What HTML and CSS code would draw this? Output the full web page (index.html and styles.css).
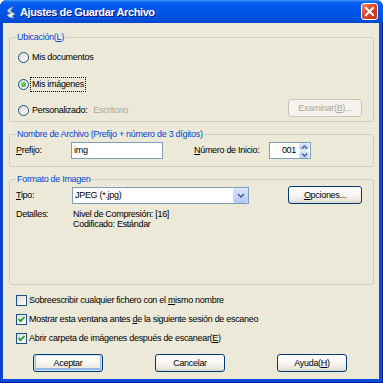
FILE: index.html
```html
<html>
<head>
  <meta charset="UTF-8">
  <title>Ajustes de Guardar Archivo</title>
  <link rel="stylesheet" href="styles.css">
</head>
<body>

<div class="window">

  <div class="titlebar">
    <svg class="app-icon" width="12" height="13" viewBox="0 0 12 13">
      <path d="M8 1 C4 2 2 4 3 6 L6 7 L2 9 C3 11 6 12 9 12 L7 10 L10 8 L5 5 Z" fill="#e8ecf4" stroke="#8a96aa" stroke-width="0.8"/>
    </svg>
    <span class="title">Ajustes de Guardar Archivo</span>
    <span class="close">
      <svg width="11" height="11" viewBox="0 0 11 11"><path d="M2 2 L9 9 M9 2 L2 9" stroke="#fff" stroke-width="2" stroke-linecap="square"/></svg>
    </span>
  </div>

  <div class="client">

    <fieldset class="group g-location">
      <legend>Ubicación(<u>L</u>)</legend>
      <div class="opt">
        <span class="radio"></span><span>Mis documentos</span>
      </div>
      <div class="opt r2">
        <span class="radio on"></span><span class="focus">Mis imágenes</span>
      </div>
      <div class="opt r3">
        <span class="radio"></span><span>Personalizado:</span><span class="dim path">Escritorio</span>
        <span class="btn disabled browse">Examinar(<u>B</u>)...</span>
      </div>
    </fieldset>

    <fieldset class="group g-name">
      <legend>Nombre de Archivo (Prefijo + número de 3 dígitos)</legend>
      <div class="field-row">
        <span class="lbl"><u>P</u>refijo:</span>
        <span class="txt">img</span>
        <span class="lbl num-lbl"><u>N</u>úmero de Inicio:</span>
        <span class="spin">
          <span class="spin-val">001</span>
          <span class="spin-btns">
            <span class="spin-b"><svg width="7" height="4" viewBox="0 0 7 4"><path d="M1 3.5 L3.5 1 L6 3.5" fill="none" stroke="#4d6185" stroke-width="1.3"/></svg></span>
            <span class="spin-b"><svg width="7" height="4" viewBox="0 0 7 4"><path d="M1 0.5 L3.5 3 L6 0.5" fill="none" stroke="#4d6185" stroke-width="1.3"/></svg></span>
          </span>
        </span>
      </div>
    </fieldset>

    <fieldset class="group g-format">
      <legend>Formato de Imagen</legend>
      <div class="field-row type-row">
        <span class="lbl"><u>T</u>ipo:</span>
        <span class="combo">
          <span class="combo-val">JPEG (*.jpg)</span>
          <span class="combo-arrow"><svg width="8" height="5" viewBox="0 0 8 5"><path d="M1 1 L4 4 L7 1" fill="none" stroke="#4d6185" stroke-width="1.6"/></svg></span>
        </span>
        <span class="btn options"><u>O</u>pciones...</span>
      </div>
      <div class="details">
        <span class="lbl dlbl">Detalles:</span>
        <span>Nivel de Compresión: [16]<br>Codificado: Estándar</span>
      </div>
    </fieldset>

    <div class="checks">
      <div class="chk"><span class="box"></span><span>Sobreescribir cualquier fichero con el <u>m</u>ismo nombre</span></div>
      <div class="chk"><span class="box on"><svg width="9" height="9" viewBox="0 0 9 9"><path d="M1.5 4 L3.5 6.2 L7.5 2" fill="none" stroke="#21a121" stroke-width="1.8"/></svg></span><span>Mostrar esta ventana antes <u>d</u>e la siguiente sesión de escaneo</span></div>
      <div class="chk"><span class="box on"><svg width="9" height="9" viewBox="0 0 9 9"><path d="M1.5 4 L3.5 6.2 L7.5 2" fill="none" stroke="#21a121" stroke-width="1.8"/></svg></span><span>Abrir carpeta de imágenes después de escanear(<u>E</u>)</span></div>
    </div>

    <div class="actions">
      <span class="btn default">Aceptar</span>
      <span class="btn">Cancelar</span>
      <span class="btn">Ayuda(<u>H</u>)</span>
    </div>

  </div>
</div>

</body>
</html>
```

FILE: styles.css
```css
body { margin:0; padding:0; background:#fff; font: 9px/11px "Liberation Sans", Arial, sans-serif; letter-spacing:-0.3px; color:#000; }
u { text-underline-offset:1px; }

.window {
  width:383px; height:383px;
  display:flex; flex-direction:column;
  background:#0a4bda;
  border-radius:7px 7px 0 0;
  overflow:hidden;
  box-shadow: inset -1px -1px 0 #00179a, inset 1px 0 0 #0a3fc0;
}

.titlebar {
  height:23px; flex:none;
  display:flex; align-items:center;
  padding:0 5px 0 5px;
  color:#fff;
  background: linear-gradient(#4a9bff 0, #0a64f2 2px, #0059ee 6px, #0055e5 13px, #0052e0 18px, #0047cc 23px);
}
.app-icon { margin:2px 3px 0 0; }
.title { font-weight:bold; font-size:11px; letter-spacing:-0.4px; margin-top:2px; text-shadow:1px 1px 0 #0a1883; }
.close {
  margin-left:auto;
  width:15px; height:15px;
  border:1px solid #fff; border-radius:3px;
  background: linear-gradient(135deg, #ef8a66, #d8492a 45%, #c23414);
  display:flex; align-items:center; justify-content:center;
}

.client {
  flex:1;
  margin:0 4px 4px 3px;
  background:#ece9d8;
  padding:9px 5px 0 6px;
  display:flex; flex-direction:column;
}

.group { margin:0; border:1px solid #d0d0bf; border-radius:3px; padding:0 6px; min-width:0; }
.group legend { color:#0046d5; padding:0 1px; line-height:11px; }

.g-location { padding:6px 6px 3px; }
.opt { display:flex; align-items:center; height:16px; padding-left:2px; }
.opt.r2 { margin-top:11px; }
.opt.r3 { margin-top:10px; }
.radio {
  width:11px; height:11px; box-sizing:border-box; flex:none;
  border:1px solid #1c5180; border-radius:50%;
  background: linear-gradient(135deg, #dcdcd4, #fff);
  margin-right:3px;
  display:flex; align-items:center; justify-content:center;
}
.radio.on::after { content:""; width:5px; height:5px; border-radius:50%; background: radial-gradient(circle at 35% 35%, #6ee06e, #21a121); }
.focus { outline:1px dotted #000; padding:1px 1px; margin-left:-1px; }
.dim { color:#aca899; }
.path { margin-left:6px; }

.btn {
  width:70px; height:18px; box-sizing:border-box;
  border:1px solid #003c74; border-radius:3px;
  background: linear-gradient(#fff, #f5f4ef 55%, #e8e6dc 85%, #d6d0c5);
  display:flex; align-items:center; justify-content:center;
  flex:none;
}
.btn.default { box-shadow: inset 0 0 0 1px #cee7ff, inset 0 -1px 0 2px #98b8ea; }
.btn.disabled { border-color:#c9c7ba; background:#f4f3ee; color:#aca899; }
.browse { width:74px; margin-left:auto; margin-right:5px; align-self:flex-start; margin-top:-3px; }

.g-name { margin-top:7px; padding:2px 6px 7px; }
.field-row { display:flex; align-items:center; height:17px; }
.lbl { width:55px; flex:none; }
.txt {
  width:92px; height:17px; box-sizing:border-box; flex:none;
  border:1px solid #7f9db9; background:#fff;
  padding:0 2px; line-height:15px;
}
.num-lbl { width:75px; margin-left:31px; }
.spin {
  width:40px; height:15px; flex:none;
  border:1px solid #7f9db9; background:#fff;
  display:flex;
}
.spin-val { flex:1; text-align:right; line-height:15px; padding-right:3px; }
.spin-btns { width:10px; display:flex; flex-direction:column; gap:1px; padding:0 1px 0 0; }
.spin-b {
  flex:1; border-radius:2px;
  background: linear-gradient(#dbe6fd, #b9cdf7);
  display:flex; align-items:center; justify-content:center;
}

.g-format { margin-top:7px; padding:1px 6px 55px; }
.type-row { height:18px; }
.combo {
  width:177px; height:17px; box-sizing:border-box; flex:none;
  border:1px solid #7f9db9; background:#fff;
  display:flex; align-items:center;
  margin-left:1px;
}
.combo-val { flex:1; padding-left:2px; }
.combo-arrow {
  width:15px; height:15px;
  border-radius:2px;
  background: linear-gradient(#dbe6fd, #b4c8f6);
  display:flex; align-items:center; justify-content:center;
}
.options { width:74px; margin-left:auto; margin-right:5px; }
.details { display:flex; margin-top:5px; line-height:10px; }
.dlbl { width:57px; }

.checks { margin-top:9px; padding-left:7px; display:flex; flex-direction:column; gap:6px; }
.chk { display:flex; align-items:center; height:13px; }
.box {
  width:11px; height:11px; box-sizing:border-box; flex:none;
  border:1px solid #1c5180;
  background: linear-gradient(135deg, #dcdcd7, #fff);
  margin-right:2px;
  display:flex; align-items:center; justify-content:center;
}

.actions { display:flex; gap:52px; margin-top:9px; padding-left:24px; }
```
